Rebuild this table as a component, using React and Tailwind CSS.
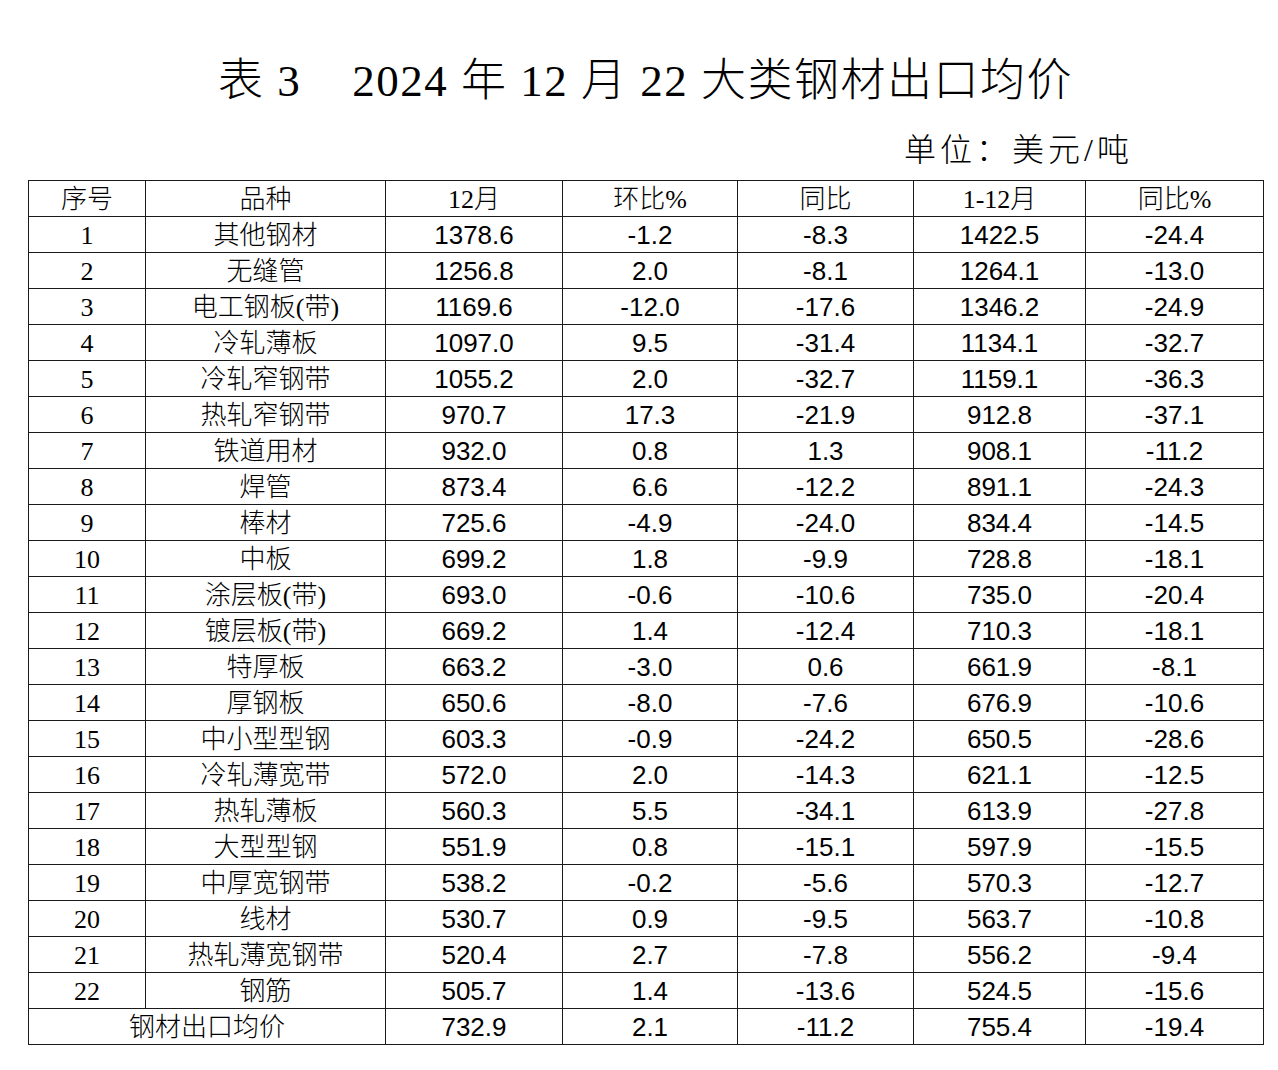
import React from 'react'

const rows = [
  ['1', '其他钢材', '1378.6', '-1.2', '-8.3', '1422.5', '-24.4'],
  ['2', '无缝管', '1256.8', '2.0', '-8.1', '1264.1', '-13.0'],
  ['3', '电工钢板(带)', '1169.6', '-12.0', '-17.6', '1346.2', '-24.9'],
  ['4', '冷轧薄板', '1097.0', '9.5', '-31.4', '1134.1', '-32.7'],
  ['5', '冷轧窄钢带', '1055.2', '2.0', '-32.7', '1159.1', '-36.3'],
  ['6', '热轧窄钢带', '970.7', '17.3', '-21.9', '912.8', '-37.1'],
  ['7', '铁道用材', '932.0', '0.8', '1.3', '908.1', '-11.2'],
  ['8', '焊管', '873.4', '6.6', '-12.2', '891.1', '-24.3'],
  ['9', '棒材', '725.6', '-4.9', '-24.0', '834.4', '-14.5'],
  ['10', '中板', '699.2', '1.8', '-9.9', '728.8', '-18.1'],
  ['11', '涂层板(带)', '693.0', '-0.6', '-10.6', '735.0', '-20.4'],
  ['12', '镀层板(带)', '669.2', '1.4', '-12.4', '710.3', '-18.1'],
  ['13', '特厚板', '663.2', '-3.0', '0.6', '661.9', '-8.1'],
  ['14', '厚钢板', '650.6', '-8.0', '-7.6', '676.9', '-10.6'],
  ['15', '中小型型钢', '603.3', '-0.9', '-24.2', '650.5', '-28.6'],
  ['16', '冷轧薄宽带', '572.0', '2.0', '-14.3', '621.1', '-12.5'],
  ['17', '热轧薄板', '560.3', '5.5', '-34.1', '613.9', '-27.8'],
  ['18', '大型型钢', '551.9', '0.8', '-15.1', '597.9', '-15.5'],
  ['19', '中厚宽钢带', '538.2', '-0.2', '-5.6', '570.3', '-12.7'],
  ['20', '线材', '530.7', '0.9', '-9.5', '563.7', '-10.8'],
  ['21', '热轧薄宽钢带', '520.4', '2.7', '-7.8', '556.2', '-9.4'],
  ['22', '钢筋', '505.7', '1.4', '-13.6', '524.5', '-15.6'],
]

const serif = "font-['Liberation_Serif','Noto_Sans_CJK_SC',serif] font-light"
const sans = "font-['Liberation_Sans',Arial,sans-serif]"
const cell = 'border border-[#1a1a1a] h-9 p-0 text-center align-middle leading-none'

function App() {
  return (
    <div className="w-[1278px] h-[1070px] bg-white text-black">
      <div className="ml-[28px] w-[1235px]">
        {/* title */}
        <h1 className={`pt-[57px] h-[118px] text-center text-[45px] leading-[48px] tracking-[1.5px] whitespace-pre ${serif}`}>
          {'表 3    2024 年 12 月 22 大类钢材出口均价'}
        </h1>
        <div className={`h-[62px] pt-[15px] flex justify-end pr-[130px] text-[32px] leading-[34px] tracking-[4px] ${serif}`}>
          单位：美元/吨
        </div>

        <table className="w-full border-collapse table-fixed">
          <colgroup>
            <col className="w-[117px]" />
            <col className="w-[240px]" />
            <col className="w-[177px]" />
            <col className="w-[175px]" />
            <col className="w-[176px]" />
            <col className="w-[172px]" />
            <col className="w-[178px]" />
          </colgroup>
          <thead>
            <tr className={`text-[26px] ${serif}`}>
              {['序号', '品种', '12月', '环比%', '同比', '1-12月', '同比%'].map((h) => (
                <th key={h} className={`${cell} font-light pt-[2px]`}>{h}</th>
              ))}
            </tr>
          </thead>
          <tbody>
            {rows.map((r) => (
              <tr key={r[0]}>
                <td className={`${cell} pt-[2px] text-[26px] ${serif}`}>{r[0]}</td>
                <td className={`${cell} pt-[3px] text-[26px] ${serif}`}>{r[1]}</td>
                {r.slice(2).map((v, i) => (
                  <td key={i} className={`${cell} text-[26px] ${sans}`}>{v}</td>
                ))}
              </tr>
            ))}
            <tr>
              <td colSpan={2} className={`${cell} pt-[3px] text-[26px] ${serif}`}>钢材出口均价</td>
              {['732.9', '2.1', '-11.2', '755.4', '-19.4'].map((v, i) => (
                <td key={i} className={`${cell} text-[26px] ${sans}`}>{v}</td>
              ))}
            </tr>
          </tbody>
        </table>
      </div>
    </div>
  )
}

export default App
